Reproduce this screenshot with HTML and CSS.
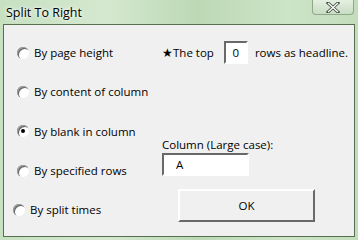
FILE: index.html
```html
<!DOCTYPE html>
<html lang="en">
<head>
    <meta charset="UTF-8">
    <title>Split To Right</title>
    <link rel="stylesheet" href="styles.css">
</head>
<body>

    <div id="fenetre">
        <div class="titre">
            <span class="titre-texte">Split To Right</span>
            <span class="fermer">
                <svg width="14" height="11" viewBox="0 0 14 11">
                    <path d="M2 1 L12 10 M12 1 L2 10" stroke="#3c4a3c" stroke-width="3" stroke-linecap="square"/>
                    <path d="M2 1 L12 10 M12 1 L2 10" stroke="#ffffff" stroke-width="1.4"/>
                </svg>
            </span>
        </div>

        <div class="client">
            <div class="options">
                <label class="option"><span class="radio"></span>By page height</label>
                <label class="option"><span class="radio"></span>By content of column</label>
                <label class="option"><span class="radio coche"></span>By blank in column</label>
                <label class="option"><span class="radio"></span>By specified rows</label>
                <label class="option decale"><span class="radio"></span>By split times</label>
            </div>

            <div class="reglages">
                <div class="entete">
                    <span>&#9733;The top</span>
                    <span class="champ petit">0</span>
                    <span>rows as headline.</span>
                </div>
                <div class="colonne">
                    <span>Column (Large case):</span>
                    <span class="champ large">A</span>
                </div>
                <div class="bouton">OK</div>
            </div>
        </div>
    </div>

</body>
</html>
```

FILE: styles.css
```css
body {
    margin: 0;
    padding: 0;
    font-family: "Open Sans", "Noto Sans", sans-serif;
    font-size: 11.5px;
    color: #000000;
}

#fenetre {
    width: 358px;
    height: 240px;
    box-sizing: border-box;
    padding: 0 3px 3px 3px;
    background: linear-gradient(90deg, #c6e0c0 0%, #d4e8cf 30%, #bcd9b5 55%, #cde4c7 80%, #c3ddbc 100%);
}

.titre {
    height: 24px;
    display: flex;
    justify-content: space-between;
    align-items: flex-start;
}

.titre-texte {
    padding: 4px 0 0 3px;
    font-size: 12.5px;
    text-shadow: 0 0 6px #ffffff, 0 0 3px #ffffff;
}

.fermer {
    width: 42px;
    height: 15px;
    margin-right: 1px;
    box-sizing: border-box;
    border: 1px solid #8fa88a;
    border-top: none;
    border-radius: 0 0 4px 4px;
    background: linear-gradient(#e4f0e0, #c8dcc3);
    display: flex;
    align-items: center;
    justify-content: center;
}

.client {
    height: 213px;
    box-sizing: border-box;
    background: #f0f0f0;
    border: 1px solid #56704f;
    display: flex;
}

.options {
    width: 158px;
    padding-top: 8px;
    display: flex;
    flex-direction: column;
}

.option {
    height: 39.3px;
    display: flex;
    align-items: center;
    padding-left: 13px;
}

.option.decale {
    padding-left: 9px;
}

.radio {
    width: 12px;
    height: 12px;
    margin-right: 5px;
    border-radius: 50%;
    background: #ffffff;
    box-shadow: inset 1px 1px 0 #a0a0a0, inset 2px 2px 0 #696969;
    position: relative;
}

.radio.coche::after {
    content: "";
    position: absolute;
    left: 4px;
    top: 4px;
    width: 4px;
    height: 4px;
    border-radius: 50%;
    background: #000000;
}

.reglages {
    display: flex;
    flex-direction: column;
    padding-top: 16px;
}

.entete {
    display: flex;
    align-items: center;
}

.champ {
    box-sizing: border-box;
    height: 23px;
    background: #ffffff;
    border: 2px solid;
    border-color: #696969 #ffffff #ffffff #696969;
    display: flex;
    align-items: center;
}

.champ.petit {
    width: 24px;
    margin: 0 7px 0 10px;
    justify-content: center;
}

.champ.large {
    width: 87px;
    padding-left: 12px;
    margin-top: 1px;
}

.colonne {
    display: flex;
    flex-direction: column;
    margin-top: 73px;
}

.bouton {
    width: 137px;
    height: 33px;
    margin: 13px 0 0 16px;
    box-sizing: border-box;
    border: 2px solid;
    border-color: #ffffff #696969 #696969 #ffffff;
    display: flex;
    align-items: center;
    justify-content: center;
}
```
